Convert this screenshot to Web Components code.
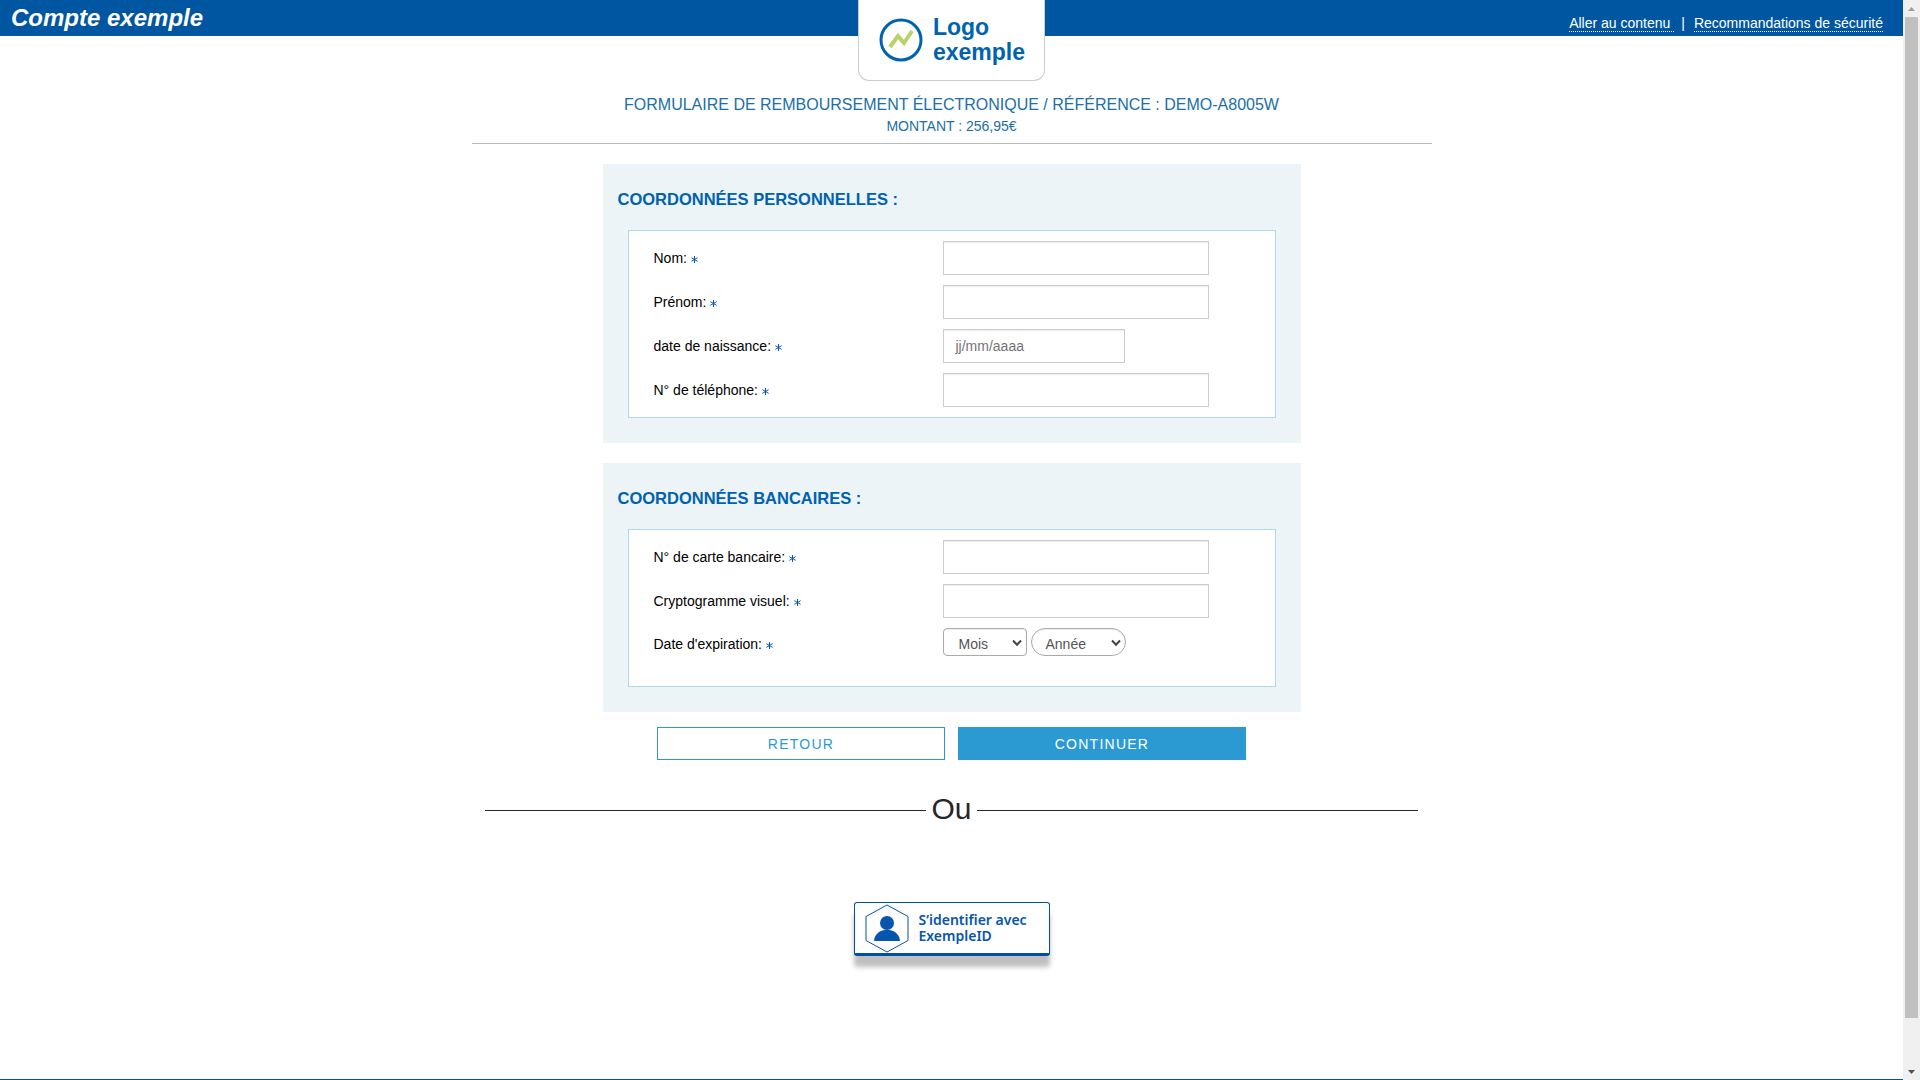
<!DOCTYPE html>
<html lang="fr">
<head>
<meta charset="utf-8">
<title>Maquette de démonstration (champs inactifs)</title>
<style>
html,body{margin:0;height:100%;overflow:hidden;background:#fff}
body{font-family:"Liberation Sans",sans-serif}
</style>
</head>
<body>
<demo-page></demo-page>
<script>
function define(name, html){
  const t=document.createElement('template');
  t.innerHTML=html;
  customElements.define(name,class extends HTMLElement{
    constructor(){super();this.attachShadow({mode:'open'}).append(t.content.cloneNode(true));}
  });
}
// Top bar with an overlapping placeholder logo tab
define('demo-header',`<style>
:host{display:flex;position:relative;height:36px;background:#0056a0;color:#fff;justify-content:space-between;box-sizing:border-box;padding:0 20px 0 11px}
.t{font:italic bold 24px/36px "Liberation Sans",sans-serif}
.l{display:flex;gap:7px;font-size:14px;line-height:16px;padding-top:15px}
.l span{white-space:pre}.u{border-bottom:1px dotted #fff;height:16px}.b{padding-right:2px}
.logo{position:absolute;left:858px;top:0;width:187px;height:81px;box-sizing:border-box;background:#fff;border:1px solid #ccc;border-top:0;border-radius:0 0 11px 11px;display:flex;align-items:center;justify-content:center;gap:9px;color:#0063b0;font:bold 23px/25px "Liberation Sans",sans-serif}
</style><div class="t">Compte exemple</div>
<div class="l"><span class="u">Aller au contenu </span><span class="b">|</span><span class="u">Recommandations de sécurité</span></div>
<div class="logo"><svg width="46" height="46" viewBox="0 0 46 46"><circle cx="23" cy="23" r="20" fill="none" stroke="#0063b0" stroke-width="3"/><path d="M12 30 20 19l6 7 8-12" fill="none" stroke="#b9d36a" stroke-width="4"/></svg><span>Logo<br>exemple</span></div>`);
define('demo-title',`<style>
:host{display:block;width:960px;height:144px;margin-top:-36px;padding-top:94px;box-sizing:border-box;border-bottom:1px solid #bbb;text-align:center;color:#206fa5}
.a{font-size:16px;line-height:22px}.b{font-size:14px;line-height:20px}
</style><div class="a"><slot></slot></div><div class="b"><slot name="amount"></slot></div>`);
define('demo-panel',`<style>
:host{display:block;width:698px;box-sizing:border-box;background:#ecf4f8;padding:0 25px 25px}
h2{margin:0 0 0 -10px;height:66px;box-sizing:border-box;padding-top:25px;font-size:16.5px;line-height:20px;color:#0061ae}
.in{box-sizing:border-box;width:648px;height:var(--h);border:1px solid #add8e6;background:#fff;padding:10px 0 0 25px;display:flex;flex-direction:column;gap:10px}
</style><h2><slot name="title"></slot></h2><div class="in"><slot></slot></div>`);
define('demo-row',`<style>
:host{display:flex;height:34px;font-size:14px;line-height:34px;color:#000}
.l{width:289px}.s{color:#0050b3;font-size:14px;margin-left:4px;display:inline-block;vertical-align:middle}
.s svg{display:block}
.f{display:flex;gap:4px;line-height:normal}
</style><div class="l"><slot></slot><span class="s"><svg width="7" height="7" viewBox="0 0 7 7"><path d="M3.5 0v7M.4 1.7l6.2 3.6M.4 5.3l6.2-3.6" stroke="#0756b5" stroke-width="1" fill="none"/></svg></span></div><div class="f"><slot name="f"></slot></div>`);
// Drawn boxes only: no value can be entered
define('demo-box',`<style>
:host{display:block;box-sizing:border-box;width:var(--w,266px);height:34px;border:1px solid #ccc;background:#fff;box-shadow:inset 0 1px 1px rgba(0,0,0,.075);padding-left:12px;font-size:14px;line-height:33px;color:#757575}
</style><slot></slot>`);
define('demo-choice',`<style>
:host{display:flex;justify-content:space-between;box-sizing:border-box;width:var(--w);height:28px;border:1px solid #aaa;border-radius:var(--r);padding:0 4px 0 var(--p);box-shadow:inset 0 1px 1px rgba(0,0,0,.075);font-size:14px;line-height:31px;color:#555}
svg{margin-top:10px}
</style><slot></slot><svg width="10" height="8" viewBox="0 0 10 8"><path d="M1 1.5 5 5.7 9 1.5" fill="none" stroke="#444" stroke-width="2"/></svg>`);
define('demo-action',`<style>
:host{display:block;box-sizing:border-box;width:288px;height:33px;border:1px solid #2b9ad3;text-align:center;font-size:14px;line-height:32px;letter-spacing:1.25px;color:var(--c,#2b9ad3);background:var(--b,#fff)}
</style><slot></slot>`);
define('demo-or',`<style>
:host{display:flex;width:933px;height:40px;align-items:center;gap:5px;color:#272727;font-size:30px}
i{flex:1;height:1px;background:#272727;margin-top:2px}
</style><i></i><slot></slot><i></i>`);
define('demo-login',`<style>
:host{display:flex;box-sizing:border-box;width:196px;height:54px;border:1px solid #0050a4;border-bottom-width:3px;border-radius:3px;box-shadow:0 11px 5px rgba(0,0,0,.25);align-items:center;gap:10px;padding-left:10px;color:#0755ac;background:#fff;font:600 14px/16px "Noto Sans",sans-serif}
</style><svg width="44" height="49" viewBox="0 0 44 49"><path d="M22 1 43 12.5v24L22 48 1 36.5v-24z" fill="#fff" stroke="#0755ac"/><circle cx="22" cy="19" r="7" fill="#0755ac"/><path d="M9 37c1-15 25-15 26 0z" fill="#0755ac"/></svg><span><slot></slot></span>`);
define('demo-scroll',`<style>
:host{display:flex;flex-direction:column;align-items:center;justify-content:space-between;width:17px;height:1080px;background:#f0f0f0}
.a{height:17px;display:flex;align-items:center}.th{width:13px;height:1001px;background:#c0c0c0}.sp{flex:1}
</style><div class="a"><svg width="7" height="4"><path d="M0 4 3.5 0 7 4z" fill="#a0a0a0"/></svg></div><div class="th"></div><div class="sp"></div><div class="a"><svg width="7" height="4"><path d="M0 0h7L3.5 4z" fill="#505050"/></svg></div>`);
define('demo-page',`<style>
:host{display:flex;width:1920px;height:1080px}
main{width:1903px;height:1080px;box-sizing:border-box;border-bottom:1px solid #0056a0}
.c{display:flex;flex-direction:column;align-items:center}
.p1{margin-top:20px;--h:188px}.p2{margin-top:20px;--h:158px}
.x{display:flex;gap:13px;margin-top:15px}
</style>
<main><demo-header></demo-header>
<div class="c">
<demo-title>FORMULAIRE DE REMBOURSEMENT ÉLECTRONIQUE / RÉFÉRENCE : DEMO-A8005W<span slot="amount">MONTANT : 256,95€</span></demo-title>
<demo-panel class="p1"><span slot="title">COORDONNÉES PERSONNELLES :</span>
<demo-row>Nom:<demo-box slot="f"></demo-box></demo-row>
<demo-row>Prénom:<demo-box slot="f"></demo-box></demo-row>
<demo-row>date de naissance:<demo-box slot="f" style="--w:182px">jj/mm/aaaa</demo-box></demo-row>
<demo-row>N° de téléphone:<demo-box slot="f"></demo-box></demo-row></demo-panel>
<demo-panel class="p2"><span slot="title">COORDONNÉES BANCAIRES :</span>
<demo-row>N° de carte bancaire:<demo-box slot="f"></demo-box></demo-row>
<demo-row>Cryptogramme visuel:<demo-box slot="f"></demo-box></demo-row>
<demo-row style="line-height:32px">Date d'expiration:<demo-choice slot="f" style="--w:84px;--r:4px;--p:15px">Mois</demo-choice><demo-choice slot="f" style="--w:95px;--r:14px;--p:14px">Année</demo-choice></demo-row></demo-panel>
<div class="x"><demo-action>RETOUR</demo-action><demo-action style="--b:#2b9ad3;--c:#fff">CONTINUER</demo-action></div>
<demo-or style="margin-top:29px">Ou</demo-or>
<demo-login style="margin-top:73px">S’identifier avec<br>ExempleID</demo-login>
</div></main><demo-scroll></demo-scroll>`);
</script>
</body>
</html>
